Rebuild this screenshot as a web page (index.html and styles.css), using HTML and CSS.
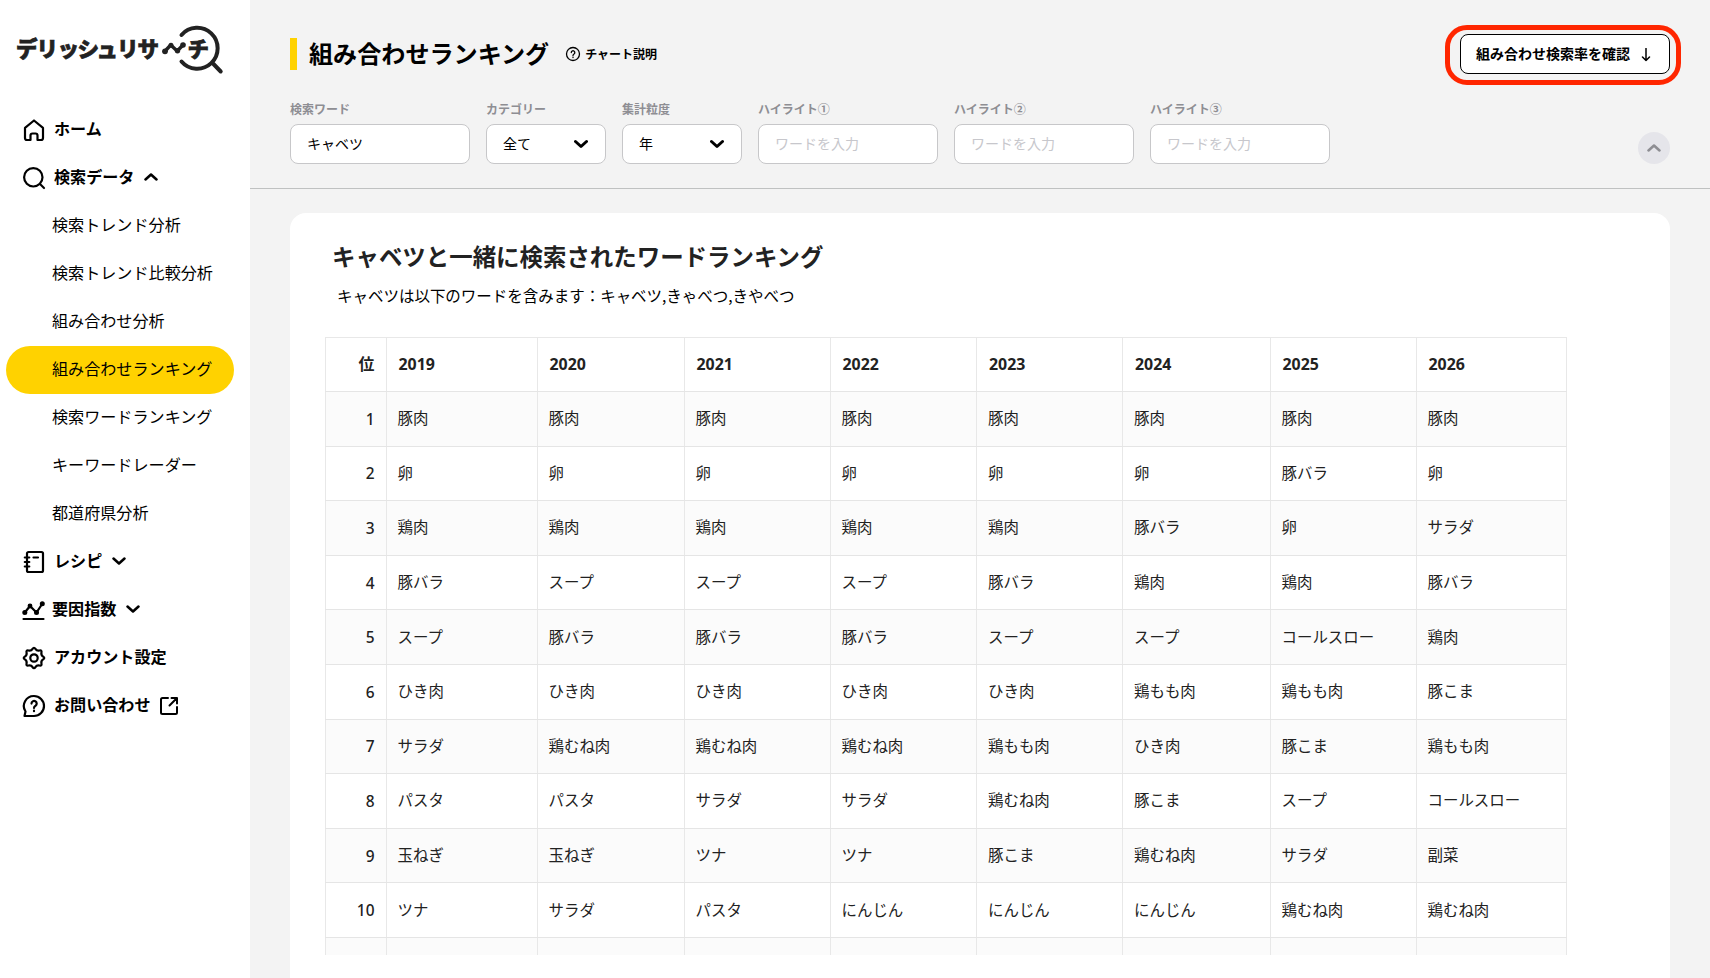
FILE: index.html
```html
<!DOCTYPE html>
<html lang="ja">
<head>
<meta charset="utf-8">
<title>組み合わせランキング</title>
<link rel="stylesheet" href="styles.css">
</head>
<body>
<div class="app">
<aside class="sidebar">
  <svg class="logo" width="210" height="56" viewBox="0 0 210 56" role="img">
    <text class="logo-text" y="36.500" x="-1 19.500 40.500 60.500 79.500 100 120.500">デリッシュリサ</text>
    <text class="logo-text" y="36.500" x="170.500">チ</text>
    <g fill="none" stroke="#222" stroke-linecap="round" stroke-linejoin="round">
      <path stroke-width="3.400" d="M147.700 31.500l6-6.500 6.500 6 6.300-6.500"/>
      <path stroke-width="4" d="M164.500 15A20.500 20.500 0 1 1 164.500 41.500M196 43.500l7.700 8"/>
    </g>
    <g fill="#222"><circle cx="148" cy="31.300" r="2.900"/><circle cx="154" cy="25.200" r="2.500"/><circle cx="160.500" cy="30.800" r="2.700"/><circle cx="166" cy="25" r="2.800"/></g>
  </svg>
  <nav class="nav">
    <a class="item"><svg class="icon" viewBox="0 0 24 24"><path d="M3 9.800 12 2.500l9 7.300V20a2 2 0 0 1-2 2h-3.500v-4.500a2 2 0 0 0-2-2h-3a2 2 0 0 0-2 2V22H5a2 2 0 0 1-2-2z"/></svg><span>ホーム</span></a>
    <a class="item"><svg class="icon" viewBox="0 0 24 24"><circle cx="11.300" cy="11.300" r="9.200"/><path d="m18 18 4 4"/></svg><span>検索データ</span><svg class="chev" viewBox="0 0 14 14"><path d="m1.500 9.500 5.500-5 5.500 5"/></svg></a>
    <a class="sub">検索トレンド分析</a>
    <a class="sub">検索トレンド比較分析</a>
    <a class="sub">組み合わせ分析</a>
    <a class="sub active">組み合わせランキング</a>
    <a class="sub">検索ワードランキング</a>
    <a class="sub">キーワードレーダー</a>
    <a class="sub">都道府県分析</a>
    <a class="item"><svg class="icon" viewBox="0 0 24 24"><rect x="5" y="2" width="16" height="20" rx="1.500"/><path d="M2.800 7.500h4.500M2.800 12h4.500M2.800 16.500h4.500M11.500 7.500h4.500"/></svg><span>レシピ</span><svg class="chev" viewBox="0 0 14 14"><path d="m1.500 4.500 5.500 5 5.500-5"/></svg></a>
    <a class="item tight"><svg class="icon" viewBox="0 0 24 24"><path d="m2.800 14.500 5.200-6.500 6.500 6.500 6-9M1.500 21h20"/><g class="dots"><circle cx="2.800" cy="14.500" r="2.500"/><circle cx="8" cy="8" r="2.400"/><circle cx="14.500" cy="14.500" r="2.500"/><circle cx="20.300" cy="5.700" r="2.500"/></g></svg><span>要因指数</span><svg class="chev" viewBox="0 0 14 14"><path d="m1.500 4.500 5.500 5 5.500-5"/></svg></a>
    <a class="item"><svg class="icon" viewBox="0 0 24 24"><circle cx="12" cy="12" r="3.700"/><path d="M21.120 10.585Q23.400 12 21.120 13.415T19.450 17.450T17.450 19.450T13.415 21.120T10.585 21.120T6.550 19.450T4.550 17.450T2.880 13.415T2.880 10.585T4.550 6.550T6.550 4.550T10.585 2.880T13.415 2.880T17.450 4.550T19.450 6.550T21.120 10.585Z"/></svg><span>アカウント設定</span></a>
    <a class="item"><svg class="icon" viewBox="0 0 24 24"><path d="M12 2a10 10 0 1 1 0 20H2.500l1-4.500A10 10 0 0 1 12 2z"/><path d="M9.500 9.600a2.600 2.600 0 1 1 4 2.200c-1 .6-1.500 1-1.500 2.200M12 16.700v.5"/></svg><span>お問い合わせ</span><svg class="ext" viewBox="0 0 20 20"><path d="M9 2H3.500A1.500 1.500 0 0 0 2 3.500v13A1.500 1.500 0 0 0 3.500 18h13a1.500 1.500 0 0 0 1.500-1.500V11M12.500 2H18v5.500M18 2l-7.500 7.500"/></svg></a>
  </nav>
</aside>
<main class="main">
  <header class="head">
    <div class="title-row">
      <h1>組み合わせランキング</h1>
      <div class="help"><svg viewBox="0 0 16 16"><circle cx="8" cy="8" r="6.500"/><path d="M6.300 6.500a1.750 1.750 0 1 1 2.700 1.500c-.7.4-1 .7-1 1.500M8 11.100v.4"/></svg><span>チャート説明</span></div>
      <button class="check">組み合わせ検索率を確認<svg viewBox="0 0 10 14"><path d="M5 .5v12M1.500 9 5 12.500 8.500 9"/></svg></button>
    </div>
    <div class="filters">
      <label class="field">検索ワード<span class="box">キャベツ</span></label>
      <label class="field narrow">カテゴリー<span class="box">全て<svg class="chev" viewBox="0 0 14 14"><path d="m1.500 4.500 5.500 5 5.500-5"/></svg></span></label>
      <label class="field narrow">集計粒度<span class="box">年<svg class="chev" viewBox="0 0 14 14"><path d="m1.500 4.500 5.500 5 5.500-5"/></svg></span></label>
      <label class="field">ハイライト①<span class="box ph">ワードを入力</span></label>
      <label class="field">ハイライト②<span class="box ph">ワードを入力</span></label>
      <label class="field">ハイライト③<span class="box ph">ワードを入力</span></label>
      <button class="fold"><svg class="chev" viewBox="0 0 14 14"><path d="m1.500 9.500 5.500-5 5.500 5"/></svg></button>
    </div>
  </header>
  <section class="card">
    <h2>キャベツと一緒に検索されたワードランキング</h2>
    <p class="note">キャベツは以下のワードを含みます：キャベツ,きゃべつ,きやべつ</p>
    <div class="table">
      <div class="row th"><b>位</b><b>2019</b><b>2020</b><b>2021</b><b>2022</b><b>2023</b><b>2024</b><b>2025</b><b>2026</b></div>
      <div class="row"><i>1</i><span>豚肉</span><span>豚肉</span><span>豚肉</span><span>豚肉</span><span>豚肉</span><span>豚肉</span><span>豚肉</span><span>豚肉</span></div>
      <div class="row"><i>2</i><span>卵</span><span>卵</span><span>卵</span><span>卵</span><span>卵</span><span>卵</span><span>豚バラ</span><span>卵</span></div>
      <div class="row"><i>3</i><span>鶏肉</span><span>鶏肉</span><span>鶏肉</span><span>鶏肉</span><span>鶏肉</span><span>豚バラ</span><span>卵</span><span>サラダ</span></div>
      <div class="row"><i>4</i><span>豚バラ</span><span>スープ</span><span>スープ</span><span>スープ</span><span>豚バラ</span><span>鶏肉</span><span>鶏肉</span><span>豚バラ</span></div>
      <div class="row"><i>5</i><span>スープ</span><span>豚バラ</span><span>豚バラ</span><span>豚バラ</span><span>スープ</span><span>スープ</span><span>コールスロー</span><span>鶏肉</span></div>
      <div class="row"><i>6</i><span>ひき肉</span><span>ひき肉</span><span>ひき肉</span><span>ひき肉</span><span>ひき肉</span><span>鶏もも肉</span><span>鶏もも肉</span><span>豚こま</span></div>
      <div class="row"><i>7</i><span>サラダ</span><span>鶏むね肉</span><span>鶏むね肉</span><span>鶏むね肉</span><span>鶏もも肉</span><span>ひき肉</span><span>豚こま</span><span>鶏もも肉</span></div>
      <div class="row"><i>8</i><span>パスタ</span><span>パスタ</span><span>サラダ</span><span>サラダ</span><span>鶏むね肉</span><span>豚こま</span><span>スープ</span><span>コールスロー</span></div>
      <div class="row"><i>9</i><span>玉ねぎ</span><span>玉ねぎ</span><span>ツナ</span><span>ツナ</span><span>豚こま</span><span>鶏むね肉</span><span>サラダ</span><span>副菜</span></div>
      <div class="row"><i>10</i><span>ツナ</span><span>サラダ</span><span>パスタ</span><span>にんじん</span><span>にんじん</span><span>にんじん</span><span>鶏むね肉</span><span>鶏むね肉</span></div>
      <div class="row"><i></i><span></span><span></span><span></span><span></span><span></span><span></span><span></span><span></span></div>
    </div>
  </section>
</main>
</div>
</body>
</html>
```
FILE: styles.css
```css
* { box-sizing: border-box; }
body {
  margin: 0;
  font-family: "Noto Sans CJK JP", sans-serif;
  color: #000;
  background: #f3f3f3;
}
.app { display: flex; height: 978px; overflow: hidden; }

/* Sidebar */
.sidebar { width: 250px; flex: none; background: #fff; padding: 20px 16px 0 6px; }
.logo { display: block; margin-left: 11px; height: 56px; overflow: visible; }
.logo-text { font-size: 21.500px; font-weight: 900; fill: #222; }
.nav { margin-top: 30px; }
.item, .sub { display: flex; align-items: center; height: 48px; font-size: 16.100px; line-height: 24px; }
.item { padding-left: 16px; font-weight: 700; }
.item span, .sub { padding-bottom: 4px; }
.sub { padding-left: 46px; border-radius: 24px; }
.active { background: #ffd200; }
.icon { width: 24px; height: 24px; margin-right: 8px; }
.tight .icon { margin-right: 6px; }
svg { flex: none; fill: none; stroke: #000; stroke-width: 2; stroke-linecap: round; stroke-linejoin: round; }
.icon { stroke-width: 2.200; }
.logo text { stroke: #222; stroke-width: .7; stroke-linejoin: miter; }
.logo g[fill="#222"] { stroke: none; }
.dots { fill: #000; stroke: none; }
.chev { width: 14px; height: 14px; stroke-width: 2.500; }
.item .chev { margin: -3px 0 0 9.700px; }
.ext { width: 20px; height: 20px; margin-left: 8px; }

/* Page header */
.main { flex: 1; min-width: 0; }
.head { height: 189px; border-bottom: 1px solid #bfc1c1; padding: 34px 40px 0; }
.title-row { display: flex; align-items: center; height: 40px; }
h1 { margin: 0; border-left: 7px solid #ffd200; padding-left: 12px; font-size: 24.100px; line-height: 30px; height: 32px; }
h1, h2 { font-weight: 700; }
.help { display: flex; align-items: center; gap: 4px; margin-left: 16px; font-size: 12px; font-weight: 700; line-height: 18px; }
.help svg { width: 16px; height: 16px; stroke-width: 1.300; }
.check {
  display: flex; align-items: center; justify-content: space-between;
  width: 210px; height: 40px; margin-left: auto; padding: 0 18px 2px 15px;
  border: 1px solid #000; border-radius: 8px; background: #fff; color: #000;
  font: 700 14px "Noto Sans CJK JP", sans-serif;
  position: relative;
}
.check::after {
  content: ""; position: absolute; inset: -10px -12px -12px -16px;
  border: 5px solid #ff2600; border-radius: 22px;
}
.check svg { width: 10px; height: 14px; stroke-width: 1.500; margin-top: 3px; }
.filters { display: flex; gap: 16px; margin-top: 26px; }
.field { width: 180px; font-size: 12px; line-height: 18px; font-weight: 700; color: #8e8e93; }
.narrow { width: 120px; }
.box {
  display: flex; align-items: center; justify-content: space-between;
  height: 40px; margin-top: 6px; padding: 0 17px 2px 16px;
  background: #fff; border: 1px solid #c7c7c9; border-radius: 8px;
  font-size: 14px; font-weight: 400; color: #000;
}
.box .chev { stroke-width: 3; margin-top: 2px; }
.ph { color: #c7c7cc; }
.fold {
  display: flex; align-items: center; justify-content: center;
  width: 32px; height: 32px; margin: 32px 0 0 auto; padding: 0;
  border: 0; border-radius: 50%; background: #e5e5ea;
}
.fold .chev { stroke: #8e8e93; }

/* Ranking card */
.card { height: 800px; margin: 24px 40px 0; padding: 25px 35px 0; background: #fff; border-radius: 16px; }
h2 { margin: 0 0 0 7px; font-size: 23.450px; line-height: 36px; color: #222; }
.note { margin: 9px 0 0 12px; font-size: 15.500px; line-height: 24px; letter-spacing: -.02px; }
.table { width: 1242px; height: 618px; margin-top: 30px; overflow: hidden; border-top: 1px solid #e8e8e8; color: #222; }
.row {
  display: grid;
  grid-template-columns: 61.500px 151px 147px 146px 146.500px 146px 147.500px 146px 150px;
  height: 54.600px; border-bottom: 1px solid #e5e5e5;
  font-size: 15.450px; line-height: 22px;
}
.row > * { display: flex; align-items: center; padding: 0 0 3px 11px; border-right: 1px solid #e8e8e8; }
.row > :first-child { justify-content: flex-end; padding-right: 11px; border-left: 1px solid #e8e8e8; }
.th { height: 54px; }
.row b, .row i { font-family: "Noto Sans", "Noto Sans CJK JP", sans-serif; font-style: normal; padding-bottom: 0; }
.row b { font-size: 15.900px; padding-left: 12px; padding-bottom: 2px; }
.row i { font-weight: 500; }
.row:nth-child(even) { background: #fbfbfb; }
```
